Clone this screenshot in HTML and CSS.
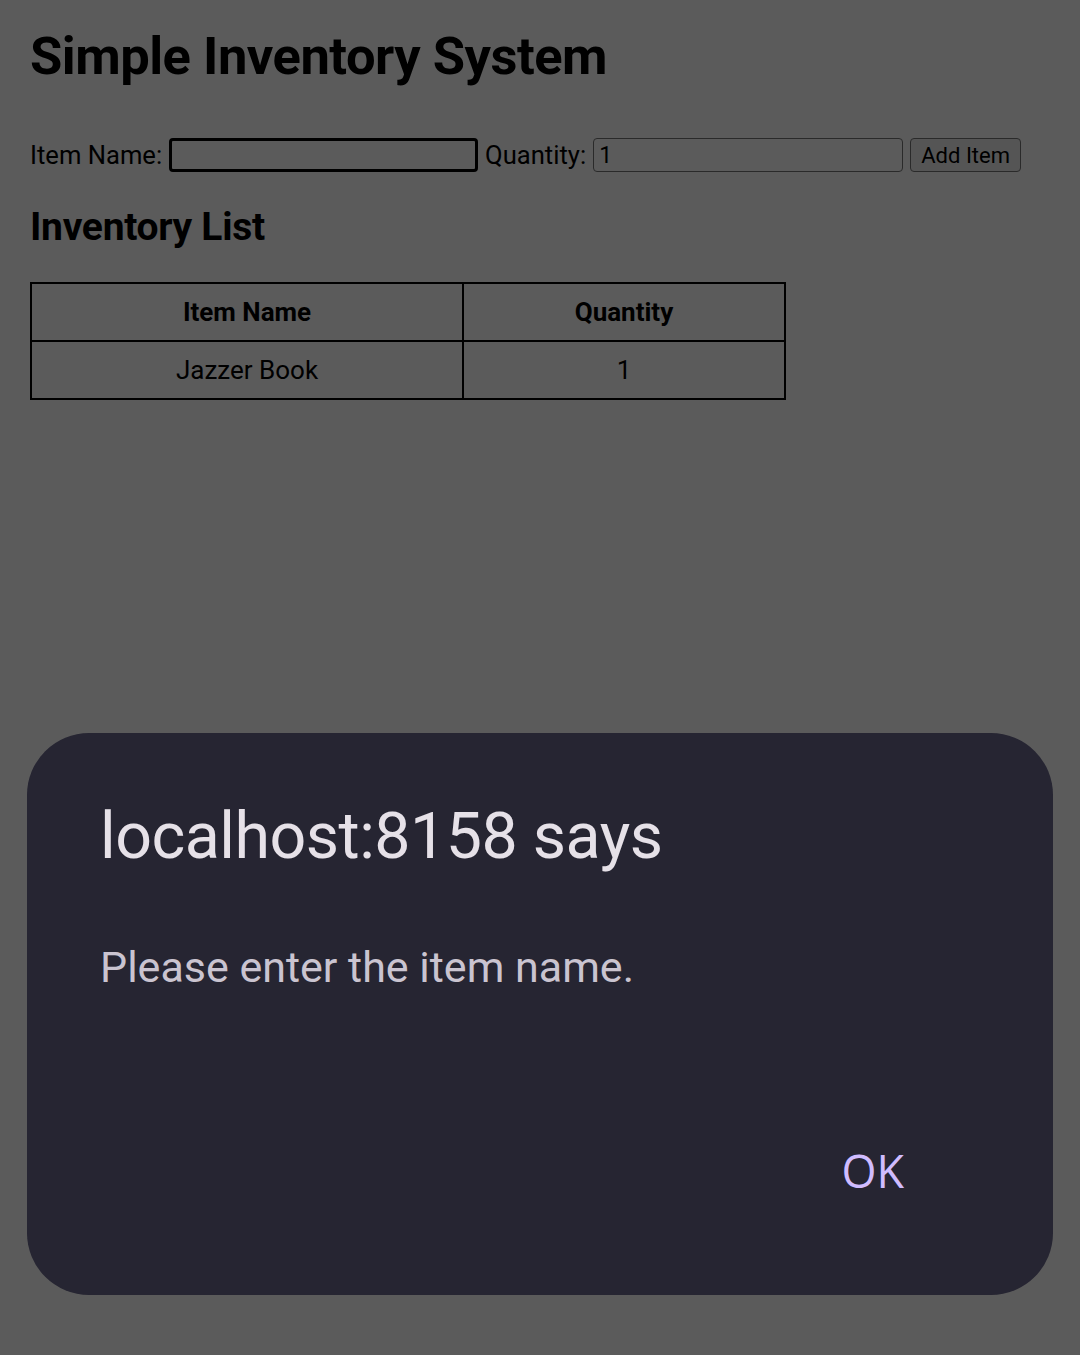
FILE: index.html
```html
<!DOCTYPE html>
<html lang="en">
<head>
<meta charset="utf-8">
<title>Simple Inventory System</title>
<link rel="stylesheet" href="styles.css">
</head>
<body>
<main class="page">
  <h1 class="title">Simple Inventory System</h1>
  <form class="add-form">
    <label class="field-label" for="itemName">Item Name:</label>
    <input class="text-input name-input" id="itemName" type="text">
    <label class="field-label" for="qty">Quantity:</label>
    <input class="text-input qty-input" id="qty" type="number" value="1">
    <button class="add-btn" type="button">Add Item</button>
  </form>
  <h2 class="subtitle">Inventory List</h2>
  <table class="inv-table">
    <thead>
      <tr><th class="col-name">Item Name</th><th class="col-qty">Quantity</th></tr>
    </thead>
    <tbody>
      <tr><td>Jazzer Book</td><td>1</td></tr>
    </tbody>
  </table>
</main>
<div class="scrim"></div>
<div class="dialog" role="alertdialog">
  <div class="dialog-title">localhost:8158 says</div>
  <div class="dialog-body">Please enter the item name.</div>
  <div class="dialog-actions"><span class="ok-btn">OK</span></div>
</div>
</body>
</html>
```
FILE: styles.css
```css
html, body {
  margin: 0;
  padding: 0;
  background: #ffffff;
  height: 100%;
}
body {
  font-family: Roboto, "Liberation Sans", sans-serif;
  color: #000;
}
.page {
  padding: 0 30px;
}
.title {
  margin: 24px 0 0;
  font-size: 52.5px;
  line-height: 64px;
  font-weight: 700;
  letter-spacing: -0.5px;
}
.add-form {
  display: flex;
  align-items: center;
  margin-top: 50px;
  height: 34px;
}
.field-label {
  font-size: 25.6px;
  line-height: 34px;
  margin-right: 7px;
}
.text-input {
  box-sizing: border-box;
  height: 34px;
  margin: 0 7px 0 0;
  font-family: Roboto, "Liberation Sans", sans-serif;
  font-size: 23px;
  padding: 0 5px;
  background: #fff;
  border-radius: 4px;
  color: #000;
}
.name-input {
  width: 309px;
  border: 3px solid #000;
  outline: none;
}
.qty-input {
  width: 310px;
  border: 1.5px solid #767676;
}
.add-btn {
  box-sizing: border-box;
  height: 34px;
  width: 111px;
  font-family: Roboto, "Liberation Sans", sans-serif;
  font-size: 22px;
  background: #efefef;
  border: 1.5px solid #767676;
  border-radius: 4px;
  color: #000;
  padding: 0;
}
.subtitle {
  margin: 31px 0 0;
  font-size: 39px;
  line-height: 48px;
  font-weight: 700;
  letter-spacing: -0.3px;
}
.inv-table {
  margin-top: 31px;
  border-collapse: collapse;
  width: 756px;
}
.inv-table th, .inv-table td {
  border: 2px solid #000;
  height: 56px;
  padding: 0;
  text-align: center;
  font-size: 26px;
}
.inv-table th { font-weight: 700; }
.col-name { width: 430px; }
.scrim {
  position: fixed;
  inset: 0;
  background: rgba(0, 0, 0, 0.645);
}
.dialog {
  position: fixed;
  left: 27px;
  top: 733px;
  width: 1026px;
  height: 562px;
  box-sizing: border-box;
  padding: 65px 149px 0 73px;
  background: #262532;
  border-radius: 62px;
  display: flex;
  flex-direction: column;
}
.dialog-title {
  font-family: Roboto, sans-serif;
  font-size: 64.5px;
  line-height: 76px;
  color: #e6e1e8;
  letter-spacing: -0.5px;
}
.dialog-body {
  margin-top: 65px;
  font-family: Roboto, sans-serif;
  font-size: 43px;
  line-height: 56px;
  color: #cac4d0;
}
.dialog-actions {
  margin-top: 146px;
  display: flex;
  justify-content: flex-end;
}
.ok-btn {
  font-family: "Open Sans", sans-serif;
  font-size: 45px;
  line-height: 60px;
  color: #d0bcff;
}
```
